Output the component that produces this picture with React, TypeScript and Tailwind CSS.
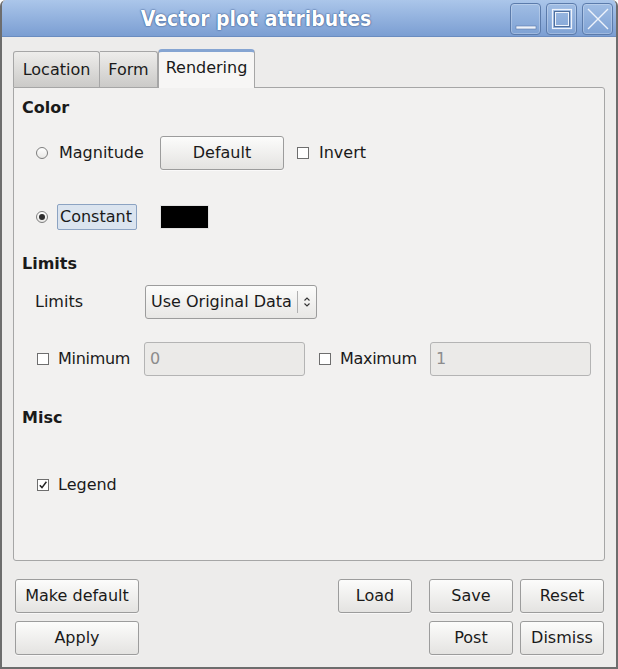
const FONT = "font-['DejaVu_Sans',sans-serif]";

function WinButton({ kind }: { kind: "min" | "max" | "close" }) {
  return (
    <div className="w-[31px] h-[32px] rounded-[4px] border border-[#5b7bab] bg-gradient-to-b from-[#a0bde4] to-[#7fa2d4] shadow-[inset_0_0_0_1px_rgba(255,255,255,0.25)] flex items-center justify-center">
      <svg width="24" height="24" viewBox="0 0 24 24" fill="none">
        {kind === "min" && (
          <rect x="2" y="19" width="20" height="3" fill="#eef3fb" stroke="#5a79a8" strokeWidth="0.6" />
        )}
        {kind === "max" && (
          <>
            <rect x="2.5" y="2.5" width="19" height="19" stroke="#eef3fb" strokeWidth="1.2" />
            <rect x="4.5" y="4.5" width="15" height="15" stroke="#4f6e9c" strokeWidth="1" />
            <rect x="5.5" y="5.5" width="13" height="13" stroke="#eef3fb" strokeWidth="1" />
          </>
        )}
        {kind === "close" && (
          <path d="M2 2L22 22M22 2L2 22" stroke="#eef3fb" strokeWidth="1.4" />
        )}
      </svg>
    </div>
  );
}

function Radio({ checked }: { checked?: boolean }) {
  return (
    <span className="w-[12px] h-[12px] rounded-full border border-[#7d7d7d] bg-gradient-to-b from-white to-[#e9e8e6] flex items-center justify-center shrink-0">
      {checked && <span className="w-[6px] h-[6px] rounded-full bg-[#2e2e2e]" />}
    </span>
  );
}

function Check({ checked }: { checked?: boolean }) {
  return (
    <span className="w-[12px] h-[12px] border border-[#6e6e6e] bg-white flex items-center justify-center shrink-0">
      {checked && (
        <svg width="10" height="10" viewBox="0 0 10 10" fill="none">
          <path d="M1.8 5.2L4 7.6L8.4 1.8" stroke="#222" strokeWidth="1.5" />
        </svg>
      )}
    </span>
  );
}

function Btn({ label, w }: { label: string; w: string }) {
  return (
    <button
      className={`${w} h-[34px] rounded-[3px] border border-[#9c9c9c] bg-gradient-to-b from-[#fcfcfb] to-[#e4e3e1] text-[16px] text-[#1a1a1a] flex items-center justify-center shadow-[0_1px_0_rgba(255,255,255,0.6)]`}
    >
      {label}
    </button>
  );
}

export default function App() {
  return (
    <div className={`${FONT} w-[618px] h-[669px] flex flex-col bg-[#edeceb] border-x-2 border-b-2 border-[#6d6d6d] rounded-t-[6px] overflow-hidden text-[#1a1a1a]`}>
      {/* title bar */}
      <div className="h-[37px] shrink-0 flex items-start bg-gradient-to-b from-[#abc6ea] to-[#7b9ed2] border-b border-[#6a8cc0]">
        <div className="flex-1 h-full flex items-center justify-center pt-[4px]">
          <span className="font-['DejaVu_Sans_Condensed','DejaVu_Sans',sans-serif] [font-stretch:condensed] text-[21px] font-bold text-white [text-shadow:0_0_2px_#34558a,0_0_1px_#34558a]">
            Vector plot attributes
          </span>
        </div>
        <div className="flex gap-[5px] pt-[3px] pr-[3px]">
          <WinButton kind="min" />
          <WinButton kind="max" />
          <WinButton kind="close" />
        </div>
      </div>

      {/* body */}
      <div className="flex-1 flex flex-col px-[11px] pt-[11px]">
        {/* tabs */}
        <div className="flex items-end h-[39px] relative z-10">
          <div className="h-[36px] w-[87px] justify-center flex items-center text-[16px] border border-b-0 border-[#a6a6a6] rounded-t-[3px] bg-gradient-to-b from-[#eeedeb] to-[#cbcac8]">
            Location
          </div>
          <div className="h-[36px] w-[58px] justify-center flex items-center text-[16px] border border-l-0 border-b-0 border-[#a6a6a6] rounded-tr-[3px] bg-gradient-to-b from-[#eeedeb] to-[#cbcac8]">
            Form
          </div>
          <div className="h-[39px] w-[97px] -mb-px pb-[4px] flex items-center justify-center text-[16px] border border-b-0 border-[#a6a6a6] border-t-[3px] border-t-[#86a5d2] rounded-t-[4px] bg-[#f7f6f5]">
            Rendering
          </div>
        </div>

        {/* panel */}
        <div className="h-[474px] border border-[#a6a6a6] rounded-b-[3px] rounded-tr-[3px] bg-[#f2f1f0] flex flex-col text-[16px]">
          <div className="h-[40px] flex items-center pl-[8px] font-bold">Color</div>

          <div className="mt-[6px] h-[37px] flex items-center">
            <span className="ml-[22px]"><Radio /></span>
            <span className="ml-[11px] w-[101px]">Magnitude</span>
            <Btn label="Default" w="w-[124px]" />
            <span className="ml-[13px]"><Check /></span>
            <span className="ml-[10px]">Invert</span>
          </div>

          <div className="mt-[33px] h-[26px] flex items-center">
            <span className="ml-[22px]"><Radio checked /></span>
            <span className="ml-[9px] h-[26px] w-[80px] flex items-center px-[2px] bg-[#dbe4ef] border border-[#8ca3c2] rounded-[2px]">
              Constant
            </span>
            <span className="ml-[23px] w-[49px] h-[24px] bg-black border border-[#e2e2e2]" />
          </div>

          <div className="mt-[19px] h-[30px] flex items-center pl-[8px] font-bold">Limits</div>

          <div className="mt-[6px] h-[34px] flex items-center">
            <span className="ml-[21px] w-[110px]">Limits</span>
            <div className="w-[172px] h-[34px] rounded-[3px] border border-[#9c9c9c] bg-gradient-to-b from-[#fcfcfb] to-[#e8e7e5] flex items-center">
              <span className="pl-[5px] w-[151px] whitespace-nowrap overflow-hidden">Use Original Data</span>
              <span className="w-px h-[22px] bg-[#b0b0b0]" />
              <svg width="18" height="18" viewBox="0 0 18 18" fill="none">
                <path d="M6.5 7.5L9 5L11.5 7.5M6.5 10.5L9 13L11.5 10.5" stroke="#333" strokeWidth="1.1" />
              </svg>
            </div>
          </div>

          <div className="mt-[23px] h-[34px] flex items-center">
            <span className="ml-[23px]"><Check /></span>
            <span className="ml-[9px] w-[86px] tracking-[-0.3px]">Minimum</span>
            <div className="w-[161px] h-[34px] rounded-[3px] border border-[#b4b4b4] bg-[#ebeae8] flex items-center pl-[5px] text-[#8c8c8c]">0</div>
            <span className="ml-[14px]"><Check /></span>
            <span className="ml-[9px] w-[90px] tracking-[-0.3px]">Maximum</span>
            <div className="w-[161px] h-[34px] rounded-[3px] border border-[#b4b4b4] bg-[#ebeae8] flex items-center pl-[5px] text-[#8c8c8c]">1</div>
          </div>

          <div className="mt-[27px] h-[30px] flex items-center pl-[8px] font-bold">Misc</div>

          <div className="mt-[42px] h-[20px] flex items-center">
            <span className="ml-[23px]"><Check checked /></span>
            <span className="ml-[9px]">Legend</span>
          </div>
        </div>

        {/* bottom buttons */}
        <div className="mt-[18px] flex flex-col gap-[8px] pl-[2px] pr-[1px]">
          <div className="flex">
            <Btn label="Make default" w="w-[124px]" />
            <div className="flex-1" />
            <Btn label="Load" w="w-[74px]" />
            <span className="w-[17px]" />
            <Btn label="Save" w="w-[84px]" />
            <span className="w-[7px]" />
            <Btn label="Reset" w="w-[84px]" />
          </div>
          <div className="flex">
            <Btn label="Apply" w="w-[124px]" />
            <div className="flex-1" />
            <Btn label="Post" w="w-[84px]" />
            <span className="w-[7px]" />
            <Btn label="Dismiss" w="w-[84px]" />
          </div>
        </div>
      </div>
    </div>
  );
}
